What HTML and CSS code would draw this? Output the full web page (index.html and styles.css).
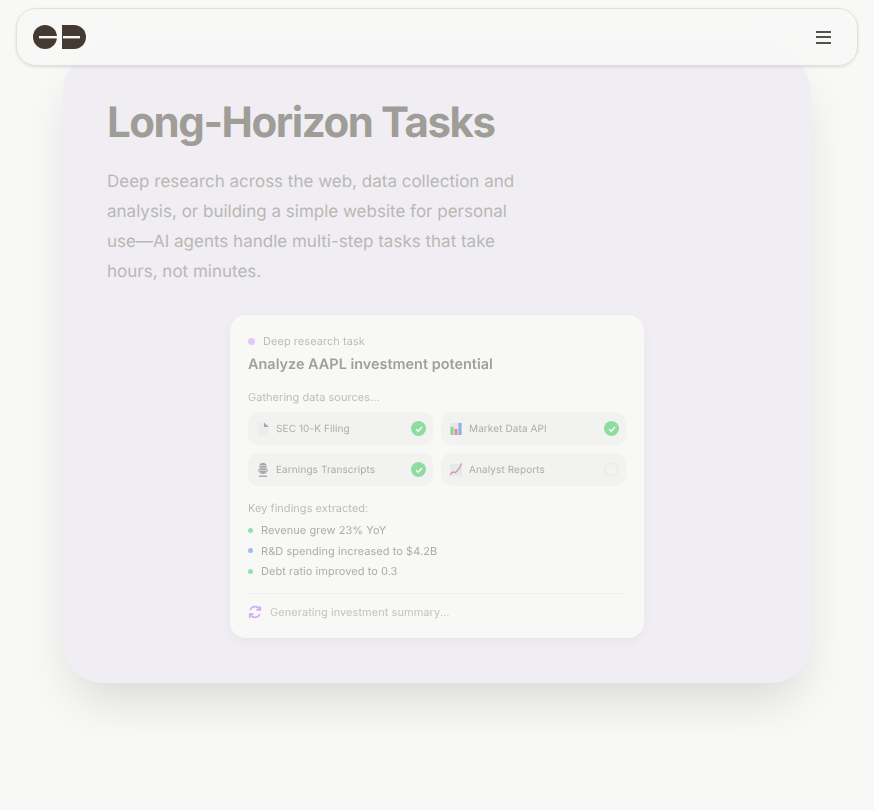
FILE: index.html
```html
<!DOCTYPE html>
<html lang="en">
<head>
    <meta charset="UTF-8">
    <meta name="viewport" content="width=device-width, initial-scale=1.0">
    <title>Long-Horizon Tasks</title>
    <link rel="stylesheet" href="styles.css">
</head>
<body>

<nav class="navbar">
    <svg class="logo" width="53" height="24" viewBox="0 0 53 24">
        <circle cx="12" cy="12" r="12" fill="#443a32"/>
        <path d="M29 0H41A12 12 0 0 1 41 24H29Z" fill="#443a32"/>
        <rect x="6" y="11" width="18" height="2.4" fill="#f8f8f7"/>
        <rect x="30" y="11" width="17" height="2.4" fill="#f8f8f7"/>
    </svg>
    <div class="menu-icon">
        <span></span>
        <span></span>
        <span></span>
    </div>
</nav>

<main class="panel">
    <h1>Long-Horizon Tasks</h1>
    <p class="lead">Deep research across the web, data collection and analysis, or building a simple website for personal use—AI agents handle multi-step tasks that take hours, not minutes.</p>

    <div class="task-card">
        <div class="task-label"><span class="dot dot-purple"></span>Deep research task</div>
        <h2>Analyze AAPL investment potential</h2>

        <div class="section-title">Gathering data sources...</div>
        <div class="sources">
            <div class="source">
                <svg class="source-icon" width="14" height="16" viewBox="0 0 14 16">
                    <path d="M2 1H8V6H13V15H2Z" fill="#ededed"/>
                    <path d="M8 1.500L13 6H8Z" fill="#a6a6a6"/>
                </svg>
                <span>SEC 10-K Filing</span>
                <span class="check"><svg width="10" height="10" viewBox="0 0 10 10"><path d="M2 5.2L4.2 7.2L8 3" fill="none" stroke="#f6fbf6" stroke-width="1.5"/></svg></span>
            </div>
            <div class="source">
                <svg class="source-icon" width="14" height="16" viewBox="0 0 14 16">
                    <rect x="1" y="2" width="12" height="12" fill="#e3e6ea"/>
                    <rect x="1.500" y="6" width="3" height="8" fill="#8fd39c"/>
                    <rect x="5.500" y="8" width="3" height="6" fill="#dc948e"/>
                    <rect x="9.500" y="2" width="3" height="12" fill="#8fafe6"/>
                </svg>
                <span>Market Data API</span>
                <span class="check"><svg width="10" height="10" viewBox="0 0 10 10"><path d="M2 5.2L4.2 7.2L8 3" fill="none" stroke="#f6fbf6" stroke-width="1.5"/></svg></span>
            </div>
            <div class="source">
                <svg class="source-icon" width="14" height="16" viewBox="0 0 14 16">
                    <rect x="3.500" y="1" width="7" height="10" rx="3" fill="#a3a6a5"/>
                    <path d="M4 3.500H10M4 6H10M4 8.500H10" stroke="#dfe1e0" stroke-width="0.800"/>
                    <path d="M2.500 7.500C2.500 13 11.500 13 11.500 7.500" fill="none" stroke="#a3a6a5" stroke-width="1"/>
                    <rect x="3" y="13.500" width="8" height="1.500" fill="#a9acab"/>
                </svg>
                <span>Earnings Transcripts</span>
                <span class="check"><svg width="10" height="10" viewBox="0 0 10 10"><path d="M2 5.2L4.2 7.2L8 3" fill="none" stroke="#f6fbf6" stroke-width="1.5"/></svg></span>
            </div>
            <div class="source">
                <svg class="source-icon" width="14" height="16" viewBox="0 0 14 16">
                    <rect x="1" y="2" width="12" height="12" fill="#e6e9ed"/>
                    <path d="M1 12.500L4 10L6.500 10.500L10 7L12.500 1.500" fill="none" stroke="#dc8f8b" stroke-width="1.200"/>
                </svg>
                <span>Analyst Reports</span>
                <span class="pending"></span>
            </div>
        </div>

        <div class="section-title findings-title">Key findings extracted:</div>
        <ul class="findings">
            <li><span class="dot-small dot-green"></span>Revenue grew 23% YoY</li>
            <li><span class="dot-small dot-blue"></span>R&amp;D spending increased to $4.2B</li>
            <li><span class="dot-small dot-green"></span>Debt ratio improved to 0.3</li>
        </ul>

        <div class="status">
            <svg width="14" height="14" viewBox="0 0 24 24" fill="none" stroke="#d3aef5" stroke-width="3" stroke-linecap="round" stroke-linejoin="round">
                <path d="M21 3v5.500h-5.500"/>
                <path d="M20.500 8.500A9 9 0 0 0 4.300 7.500"/>
                <path d="M3 21v-5.500h5.500"/>
                <path d="M3.500 15.500a9 9 0 0 0 16.200 1"/>
            </svg>
            <span>Generating investment summary...</span>
        </div>
    </div>
</main>

</body>
</html>
```

FILE: styles.css
```css
body {
    font-family: Inter, "Liberation Sans", sans-serif;
    margin: 0;
    padding: 52px 0 127px;
    background-color: #f8f8f6;
    text-rendering: geometricPrecision;
}
.navbar {
    position: absolute;
    top: 8px;
    left: 16px;
    right: 16px;
    height: 58px;
    box-sizing: border-box;
    display: flex;
    justify-content: space-between;
    align-items: center;
    padding: 0 26px 0 16px;
    background-color: rgba(248, 248, 247, 0.8);
    backdrop-filter: blur(12px);
    border: 1px solid #e0e0dd;
    border-radius: 20px;
    box-shadow: 0 1px 3px rgba(0, 0, 0, 0.12);
}
.menu-icon {
    display: flex;
    flex-direction: column;
    gap: 3.5px;
    width: 15px;
}
.menu-icon span {
    height: 2px;
    background-color: #55524e;
}
.panel {
    width: 748px;
    height: 631px;
    box-sizing: border-box;
    margin-left: 63px;
    padding: 44px 44px 0;
    background-color: #f0eef3;
    border-radius: 40px;
    box-shadow: 0 25px 50px -12px rgba(0, 0, 0, 0.14);
}
h1 {
    margin: 0;
    font-size: 42px;
    line-height: 53px;
    font-weight: 700;
    letter-spacing: -1.45px;
    color: #9e9d97;
}
.lead {
    margin: 18px 0 0;
    width: 420px;
    font-size: 17px;
    line-height: 30px;
    color: #b9b8b4;
}
.task-card {
    width: 414px;
    height: 323px;
    box-sizing: border-box;
    margin: 28px auto 0;
    padding: 19px 18px 18px;
    background-color: #f8f8f6;
    border-radius: 16px;
    box-shadow: 0 4px 12px rgba(0, 0, 0, 0.04);
    filter: blur(0.25px);
}
.task-label {
    display: flex;
    align-items: center;
    gap: 8px;
    font-size: 11px;
    line-height: 15px;
    letter-spacing: 0.05px;
    color: #bdbcb8;
}
.dot {
    width: 7px;
    height: 7px;
    border-radius: 50%;
}
.dot-purple {
    background-color: #e3c9f8;
}
h2 {
    margin: 6px 0 0;
    font-size: 14.45px;
    line-height: 20px;
    font-weight: 600;
    color: #a09f99;
}
.section-title {
    margin-top: 15px;
    font-size: 11px;
    line-height: 15px;
    letter-spacing: 0.03px;
    color: #bdbcb8;
}
.sources {
    display: grid;
    grid-template-columns: 1fr 1fr;
    gap: 8px;
    margin-top: 7px;
}
.source {
    display: flex;
    align-items: center;
    gap: 6px;
    height: 33px;
    padding: 0 7px 0 8px;
    background-color: #f2f2f1;
    border-radius: 10px;
    font-size: 10px;
    letter-spacing: 0.1px;
    color: #adaca8;
}
.check, .pending {
    margin-left: auto;
    width: 15px;
    height: 15px;
    box-sizing: border-box;
    border-radius: 50%;
}
.check {
    display: flex;
    align-items: center;
    justify-content: center;
    background-color: #8edc9f;
}
.pending {
    border: 2px solid #ececea;
}
.findings-title {
    margin-top: 15px;
}
.findings {
    list-style: none;
    margin: 4px 0 0;
    padding: 0;
}
.findings li {
    display: flex;
    align-items: center;
    gap: 8px;
    height: 20.5px;
    font-size: 11px;
    letter-spacing: 0.05px;
    color: #adaca8;
}
.dot-small {
    width: 5px;
    height: 5px;
    border-radius: 50%;
}
.dot-green {
    background-color: #95dfa8;
}
.dot-blue {
    background-color: #9dbcf6;
}
.status {
    display: flex;
    align-items: center;
    gap: 8px;
    margin-top: 11px;
    padding-top: 11px;
    border-top: 1px solid #f0f0ee;
    font-size: 11px;
    letter-spacing: 0.05px;
    color: #c4c3bf;
}
```
